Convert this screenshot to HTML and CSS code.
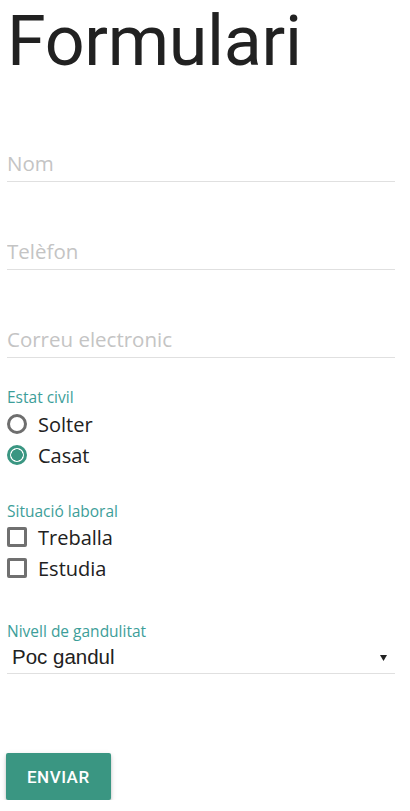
FILE: index.html
```html
<!DOCTYPE html>
<html lang="ca">
<head>
<meta charset="utf-8">
<title>Formulari</title>
<link rel="stylesheet" href="styles.css">
</head>
<body>
<main class="page">
  <h1 class="title">Formulari</h1>
  <form class="form">
    <div class="text-field"><input type="text" placeholder="Nom"></div>
    <div class="text-field"><input type="tel" placeholder="Telèfon"></div>
    <div class="text-field"><input type="email" placeholder="Correu electronic"></div>

    <fieldset class="group group-civil">
      <legend class="group-label">Estat civil</legend>
      <label class="option"><input type="radio" name="civil" class="radio"><span>Solter</span></label>
      <label class="option"><input type="radio" name="civil" class="radio" checked><span>Casat</span></label>
    </fieldset>

    <fieldset class="group group-work">
      <legend class="group-label">Situació laboral</legend>
      <label class="option"><input type="checkbox" class="check"><span>Treballa</span></label>
      <label class="option"><input type="checkbox" class="check"><span>Estudia</span></label>
    </fieldset>

    <div class="group group-level">
      <label class="group-label" for="nivell">Nivell de gandulitat</label>
      <div class="select-wrap">
        <select id="nivell" class="select">
          <option>Poc gandul</option>
          <option>Gandul</option>
          <option>Molt gandul</option>
        </select>
        <svg class="arrow" width="7" height="6" viewBox="0 0 7 6"><polygon points="0,0 7,0 3.5,6" fill="#222"/></svg>
      </div>
    </div>

    <button type="button" class="btn">ENVIAR</button>
  </form>
</main>
</body>
</html>
```

FILE: styles.css
```css
html, body {
  margin: 0;
  padding: 0;
  background: #fff;
}
body {
  font-family: "Open Sans", "DejaVu Sans", sans-serif;
  color: #212121;
}
.page {
  padding: 0 15px 0 7px;
}
.title {
  font-family: Roboto, "Liberation Sans", sans-serif;
  font-weight: 400;
  font-size: 70px;
  line-height: 82px;
  height: 70px;
  margin: 0;
  color: #212121;
  letter-spacing: -0.3px;
}
.form {
  display: flex;
  flex-direction: column;
  margin: 0;
  padding-top: 24px;
}
.text-field {
  margin-top: 54px;
}
.text-field input {
  display: block;
  box-sizing: content-box;
  width: 100%;
  height: 30px;
  padding: 0 0 3px 0;
  margin: 0;
  border: none;
  border-bottom: 1px solid #e0e0e0;
  outline: none;
  font-family: "Open Sans", sans-serif;
  font-weight: 400;
  font-size: 20.5px;
  line-height: 30px;
  color: #212121;
  background: transparent;
}
.text-field input::placeholder {
  color: #c4c4c4;
}
.group {
  border: none;
  margin: 0;
  padding: 0;
  min-width: 0;
}
.group-civil { margin-top: 29px; }
.group-work { margin-top: 30px; }
.group-level { margin-top: 37px; }
.group-label {
  display: block;
  padding: 0;
  font-size: 15.5px;
  line-height: 20px;
  height: 20px;
  color: #3d9e99;
}
.group-civil .group-label { margin-bottom: 2px; }
.group-work .group-label { margin-bottom: 1px; }
.option {
  display: flex;
  align-items: center;
  gap: 11px;
  height: 31px;
  font-size: 20px;
  line-height: 31px;
  color: #212121;
  cursor: pointer;
}
.radio, .check {
  appearance: none;
  -webkit-appearance: none;
  margin: 0;
  flex: none;
  box-sizing: border-box;
  width: 20px;
  height: 20px;
  position: relative;
  top: -1px;
}
.radio {
  border: 3px solid #6e6e6e;
  border-radius: 50%;
}
.radio:checked {
  border-color: #3a9682;
  background: radial-gradient(circle, #3a9682 0 5.5px, #fff 6px);
}
.check {
  border: 3px solid #707070;
  border-radius: 2px;
}
.check:checked {
  background: #3a9682;
  border-color: #3a9682;
}
.select-wrap {
  display: flex;
  align-items: center;
  margin-top: 4px;
  height: 28px;
  border-bottom: 1px solid #e0e0e0;
}
.select {
  flex: 1;
  appearance: none;
  -webkit-appearance: none;
  border: none;
  background: transparent;
  margin: 0;
  padding: 0 0 4px 5px;
  height: 28px;
  font-family: "Liberation Sans", Arial, sans-serif;
  font-size: 20.5px;
  line-height: 24px;
  color: #212121;
  outline: none;
}
.arrow {
  flex: none;
  margin: 0 8px 2px 0;
}
.btn {
  align-self: flex-start;
  margin-top: 79px;
  margin-left: -1px;
  height: 47px;
  padding: 0 21px;
  border: none;
  border-radius: 2px;
  background: #3a9682;
  color: #fff;
  font-family: Roboto, "Liberation Sans", sans-serif;
  font-weight: 500;
  font-size: 17px;
  letter-spacing: 0.5px;
  box-shadow: 0 2px 3px rgba(0,0,0,0.18), 0 2px 6px rgba(0,0,0,0.12);
  cursor: pointer;
}
```
